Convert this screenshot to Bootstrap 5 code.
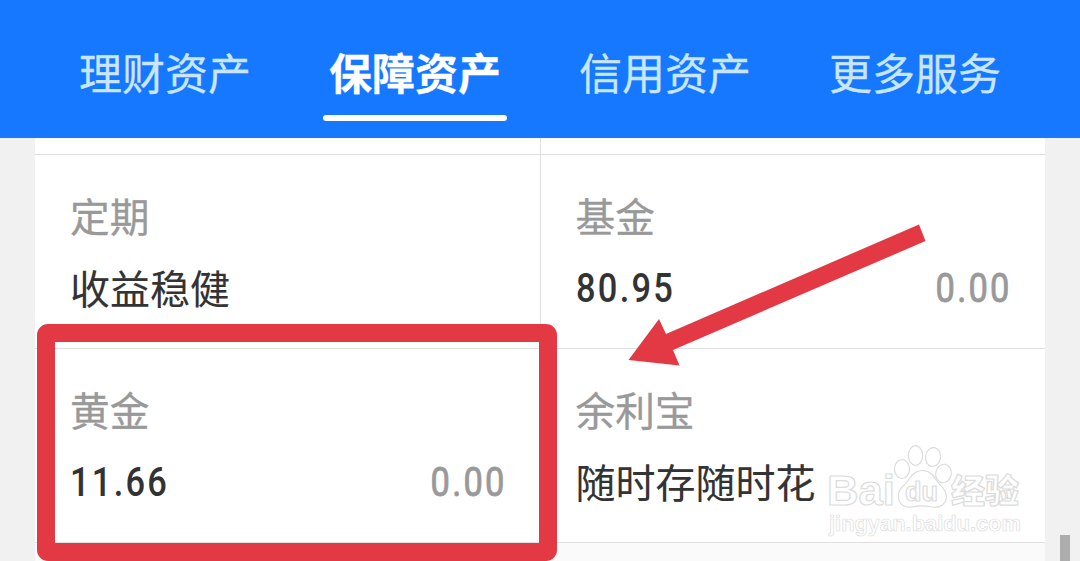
<!DOCTYPE html>
<html lang="zh-CN">
<head>
    <meta charset="UTF-8">
    <meta name="viewport" content="width=device-width, initial-scale=1.0">
    <title>保障资产</title>
    <link href="https://cdn.jsdelivr.net/npm/bootstrap@5.3.0/dist/css/bootstrap.min.css" rel="stylesheet">
    <style>
        body {
            height: 561px;
            background: #f1f1f1;
            font-family: "Noto Sans CJK SC", sans-serif;
            font-size: 40px;
            color: #333;
        }
        .top-tabs {
            height: 138px;
            padding: 0 40px;
            background: #1677ff;
        }
        .top-tabs .nav-link {
            height: 121px;
            padding: 39px 0 0;
            font-size: 43px;
            line-height: 64px;
            color: #c8e6ff;
            -webkit-text-stroke: .3px;
        }
        .top-tabs .nav-link.active {
            font-weight: 700;
            color: #fff;
        }
        .top-tabs .nav-link.active::after {
            content: "";
            display: block;
            width: 184px;
            height: 6px;
            margin: 12px auto 0;
            border-radius: 3px;
            background: #fff;
        }
        .asset-panel {
            width: 1010px;
            height: 423px;
            background: #fafafa;
        }
        .asset-top {
            height: 17px;
            border-bottom: 1px solid #e0e0e0;
        }
        .asset-row {
            height: 194px;
            border-bottom: 1px solid #e0e0e0;
        }
        .split {
            border-left: 1px solid #e0e0e0;
        }
        .asset-cell {
            padding: 30px 35px 0;
        }
        .split.asset-cell {
            padding-left: 34.5px;
        }
        .asset-name {
            height: 60px;
            line-height: 60px;
            font-size: 39.7px;
            color: #999;
            -webkit-text-stroke: .3px;
        }
        .asset-line {
            height: 60px;
            margin-top: 12px;
            line-height: 60px;
            -webkit-text-stroke: .1px;
        }
        .asset-line.d-flex {
            padding-top: 1px;
        }
        .amount, .gain {
            font-family: Roboto, sans-serif;
            font-size: 41px;
            font-weight: 500;
            letter-spacing: 2.7px;
            transform: scaleX(.84);
            transform-origin: left;
            -webkit-text-stroke: 0;
        }
        .gain {
            font-weight: 400;
            color: #999;
            margin-right: -2px;
            transform-origin: right;
            -webkit-text-stroke: .9px #999;
        }
        .red-frame {
            left: 37px;
            top: 324px;
            width: 520px;
            height: 237px;
            border: 18px solid #e33944;
            border-radius: 11px;
        }
        .scroll-thumb {
            right: 10px;
            bottom: 0;
            width: 10px;
            height: 26px;
            background: #adadad;
        }
    </style>
</head>
<body class="position-relative overflow-hidden">
    <ul class="nav nav-fill top-tabs flex-nowrap">
        <li class="nav-item w-25"><a class="nav-link" href="#">理财资产</a></li>
        <li class="nav-item w-25"><a class="nav-link active" href="#">保障资产</a></li>
        <li class="nav-item w-25"><a class="nav-link" href="#">信用资产</a></li>
        <li class="nav-item w-25"><a class="nav-link" href="#">更多服务</a></li>
    </ul>

    <div class="asset-panel mx-auto">
        <div class="row g-0 asset-top bg-white">
            <div class="col-6"></div>
            <div class="col-6 split"></div>
        </div>
        <div class="row g-0 asset-row bg-white">
            <div class="col-6 asset-cell">
                <div class="asset-name">定期</div>
                <div class="asset-line">收益稳健</div>
            </div>
            <div class="col-6 asset-cell split">
                <div class="asset-name">基金</div>
                <div class="asset-line d-flex justify-content-between">
                    <span class="amount">80.95</span>
                    <span class="gain">0.00</span>
                </div>
            </div>
        </div>
        <div class="row g-0 asset-row bg-white">
            <div class="col-6 asset-cell">
                <div class="asset-name">黄金</div>
                <div class="asset-line d-flex justify-content-between">
                    <span class="amount">11.66</span>
                    <span class="gain">0.00</span>
                </div>
            </div>
            <div class="col-6 asset-cell split">
                <div class="asset-name">余利宝</div>
                <div class="asset-line">随时存随时花</div>
            </div>
        </div>
    </div>

    <!-- Highlight and arrow over the gold cell -->
    <div class="red-frame position-absolute"></div>
    <svg class="position-absolute top-0 start-0" width="1080" height="561" viewBox="0 0 1080 561">
        <polygon points="628.5,360 659,319 666,334 919,224.5 925.5,241 673,350 679.5,365.5" fill="#e33944"/>
        <!-- Watermark -->
        <g fill="#fff" stroke="#dcdcdc" stroke-width="1.2" stroke-linejoin="round">
            <text x="827" y="505" font-family="Liberation Sans, sans-serif" font-weight="700" font-size="43" textLength="68" lengthAdjust="spacingAndGlyphs">Bai</text>
            <ellipse cx="902" cy="469" rx="7.5" ry="9.5"/>
            <ellipse cx="915.5" cy="455.5" rx="7.2" ry="9.8"/>
            <ellipse cx="933" cy="457" rx="7.5" ry="9.5" transform="rotate(8 933 457)"/>
            <ellipse cx="943.5" cy="473.5" rx="7.8" ry="9.3" transform="rotate(12 943.5 473.5)"/>
            <path d="M922 470.500C914 470.500 911 477 907 482C902 488 898 489 898.500 497C899 505 905 508 912 507C919 505.500 925 505.500 932 507C940 508.500 946 504 946.500 497C946.500 489 941 487 937 481C933 475 930 470.500 922 470.500Z"/>
            <text x="905" y="501" font-family="Liberation Sans, sans-serif" font-size="27" font-weight="700" textLength="33" lengthAdjust="spacingAndGlyphs">du</text>
            <text x="951" y="503" font-family="Noto Sans CJK SC, sans-serif" font-size="33" font-weight="900" textLength="68" lengthAdjust="spacingAndGlyphs">经验</text>
            <text x="829" y="531" font-family="Liberation Sans, sans-serif" font-size="22" font-weight="700" stroke-width=".7" textLength="192" lengthAdjust="spacingAndGlyphs">jingyan.baidu.com</text>
        </g>
    </svg>
    <div class="scroll-thumb position-absolute"></div>

    <script src="https://cdn.jsdelivr.net/npm/bootstrap@5.3.0/dist/js/bootstrap.bundle.min.js"></script>
</body>
</html>
